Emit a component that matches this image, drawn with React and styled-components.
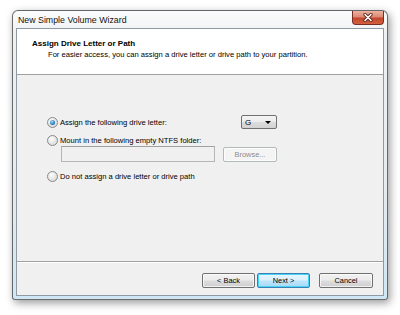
import React from "react";
import styled, { createGlobalStyle } from "styled-components";

const Global = createGlobalStyle`
  body {
    margin: 0;
    background: #fff;
    font-family: "Liberation Sans", Arial, sans-serif;
  }
`;

const Page = styled.div`
  width: 400px;
  height: 315px;
  padding: 10px 0 0 12px;
  box-sizing: border-box;
`;

const Window = styled.div`
  width: 376px;
  height: 290px;
  box-sizing: border-box;
  border: 1px solid rgba(60, 60, 60, 0.75);
  border-radius: 6px 6px 3px 3px;
  background: linear-gradient(#fbfbfb 0%, #eef1f3 8%, #e6ebee 60%, #cfe7f5 100%);
  box-shadow: 2px 3px 9px rgba(0, 0, 0, 0.4);
  display: flex;
  flex-direction: column;
  padding: 0 3px 3px 3px;
`;

const TitleBar = styled.div`
  height: 17px;
  display: flex;
  align-items: flex-start;
  justify-content: space-between;
`;

const Caption = styled.span`
  font-size: 8.8px;
  color: #111;
  padding: 4px 0 0 2px;
  text-shadow: 0 0 4px #fff;
`;

const CloseBtn = styled.div`
  width: 32px;
  height: 14px;
  box-sizing: border-box;
  border: 1px solid #7a2d22;
  border-top: none;
  border-radius: 0 0 4px 4px;
  background: linear-gradient(#eeb3a3 0%, #dc8a73 45%, #c2452c 55%, #d4613f 100%);
  display: flex;
  align-items: center;
  justify-content: center;
`;

const Client = styled.div`
  flex: 1;
  display: flex;
  flex-direction: column;
  border: 1px solid #8e9aa3;
  background: #f0f0f0;
`;

const Header = styled.div`
  height: 46px;
  background: #fff;
  border-bottom: 1px solid #a0a0a0;
  box-sizing: border-box;
  padding: 10px 0 0 15px;
`;

const HeadTitle = styled.div`
  font-size: 8px;
  font-weight: bold;
  color: #000;
  line-height: 10px;
`;

const HeadSub = styled.div`
  font-size: 7.6px;
  color: #000;
  line-height: 10px;
  padding-left: 16px;
  margin-top: 1px;
`;

const Body = styled.div`
  flex: 1;
  display: flex;
  flex-direction: column;
  padding: 40px 0 0 30px;
  border-bottom: 1px solid #a0a0a0;
`;

const Row = styled.div`
  display: flex;
  align-items: center;
  height: ${(p) => p.h || 14}px;
  margin-top: ${(p) => p.mt || 0}px;
  padding-left: ${(p) => p.indent || 0}px;
`;

const Radio = styled.span`
  width: 11px;
  height: 11px;
  border-radius: 50%;
  box-sizing: border-box;
  border: 1px solid #8a8a8a;
  background: radial-gradient(circle at 40% 35%, #ffffff 0%, #e4e4e4 55%, #cfcfcf 100%);
  display: flex;
  align-items: center;
  justify-content: center;
  flex-shrink: 0;
  &::after {
    content: "";
    display: ${(p) => (p.checked ? "block" : "none")};
    width: 5px;
    height: 5px;
    border-radius: 50%;
    background: radial-gradient(circle at 40% 35%, #a9e0ff 0%, #2c84c2 55%, #134f86 100%);
  }
`;

const Label = styled.span`
  font-size: 7.6px;
  color: #000;
  margin-left: 2px;
  width: ${(p) => (p.w ? p.w + "px" : "auto")};
  white-space: nowrap;
`;

const Combo = styled.div`
  width: 36px;
  height: 14px;
  box-sizing: border-box;
  border: 1px solid #707070;
  border-radius: 2px;
  background: linear-gradient(#f4f4f4 0%, #ececec 48%, #dcdcdc 52%, #d2d2d2 100%);
  display: flex;
  align-items: center;
  justify-content: space-between;
  padding: 0 5px 0 3px;
  font-size: 8px;
  color: #000;
`;

const Arrow = styled.span`
  width: 0;
  height: 0;
  border-left: 3px solid transparent;
  border-right: 3px solid transparent;
  border-top: 3px solid #000;
`;

const TextBox = styled.div`
  width: 154px;
  height: 16px;
  box-sizing: border-box;
  border: 1px solid #b5b5b5;
  border-top-color: #a0a0a0;
  background: #f0f0f0;
`;

const Button = styled.div`
  width: ${(p) => p.w || 53}px;
  height: 15px;
  box-sizing: border-box;
  border: 1px solid ${(p) => (p.disabled ? "#b4b9bc" : p.primary ? "#3c7fb1" : "#707070")};
  border-radius: 2px;
  background: ${(p) =>
    p.disabled
      ? "#f4f4f4"
      : p.primary
      ? "linear-gradient(#eaf6fd 0%, #d9f0fc 48%, #bee6fd 52%, #a7d9f5 100%)"
      : "linear-gradient(#f2f2f2 0%, #ebebeb 48%, #dddddd 52%, #cfcfcf 100%)"};
  box-shadow: inset 0 0 0 1px ${(p) => (p.primary ? "#48d3fb" : "rgba(255,255,255,0.7)")};
  display: flex;
  align-items: center;
  justify-content: center;
  font-size: 7.4px;
  color: ${(p) => (p.disabled ? "#8c8c8c" : "#000")};
  margin-left: ${(p) => p.ml || 0}px;
`;

const Footer = styled.div`
  height: 33px;
  border-top: 1px solid #fff;
  box-sizing: border-box;
  display: flex;
  justify-content: flex-end;
  align-items: flex-start;
  padding: 10px 10px 0 0;
`;

export default function App() {
  return (
    <Page>
      <Global />
      <Window>
        <TitleBar>
          <Caption>New Simple Volume Wizard</Caption>
          <CloseBtn>
            <svg width="10" height="9" viewBox="0 0 10 9">
              <path d="M2 1.5 L8 7.5 M8 1.5 L2 7.5" stroke="#5a1d14" strokeWidth="3.2" strokeLinecap="round" />
              <path d="M2 1.5 L8 7.5 M8 1.5 L2 7.5" stroke="#fff" strokeWidth="1.7" strokeLinecap="round" />
            </svg>
          </CloseBtn>
        </TitleBar>
        <Client>
          <Header>
            <HeadTitle>Assign Drive Letter or Path</HeadTitle>
            <HeadSub>For easier access, you can assign a drive letter or drive path to your partition.</HeadSub>
          </Header>
          <Body>
            <Row>
              <Radio checked />
              <Label w={181}>Assign the following drive letter:</Label>
              <Combo>
                G <Arrow />
              </Combo>
            </Row>
            <Row h={12} mt={5}>
              <Radio />
              <Label>Mount in the following empty NTFS folder:</Label>
            </Row>
            <Row h={16} indent={14}>
              <TextBox />
              <Button disabled w={54} ml={8}>Browse...</Button>
            </Row>
            <Row mt={7}>
              <Radio />
              <Label>Do not assign a drive letter or drive path</Label>
            </Row>
          </Body>
          <Footer>
            <Button>&lt; Back</Button>
            <Button primary ml={2}>Next &gt;</Button>
            <Button w={54} ml={9}>Cancel</Button>
          </Footer>
        </Client>
      </Window>
    </Page>
  );
}
